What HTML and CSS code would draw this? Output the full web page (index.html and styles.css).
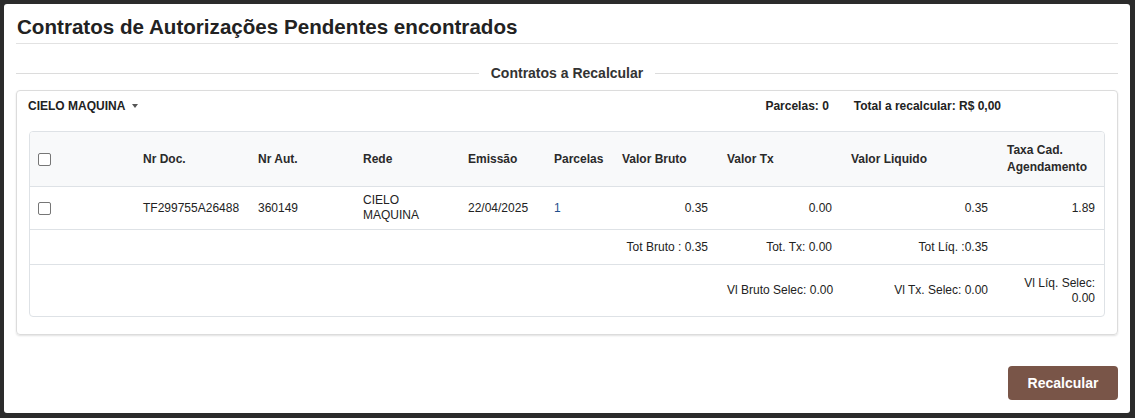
FILE: index.html
```html
<!DOCTYPE html>
<html lang="pt-BR">
<head>
<meta charset="utf-8">
<title>Contratos de Autorizações Pendentes</title>
<link rel="stylesheet" href="styles.css">
</head>
<body>
<div class="modal">
  <div class="modal-header">
    <h2 class="modal-title">Contratos de Autorizações Pendentes encontrados</h2>
  </div>
  <div class="legend">
    <span class="legend-line"></span>
    <span class="legend-text">Contratos a Recalcular</span>
    <span class="legend-line"></span>
  </div>
  <div class="card">
    <div class="card-head">
      <div class="rede-select">CIELO MAQUINA <span class="caret"></span></div>
      <div class="summary">
        <span>Parcelas: 0</span>
        <span>Total a recalcular: R$ 0,00</span>
      </div>
    </div>
    <div class="table-wrap">
      <table class="grid">
        <colgroup>
          <col class="c1"><col class="c2"><col class="c3"><col class="c4"><col class="c5">
          <col class="c6"><col class="c7"><col class="c8"><col class="c9"><col class="c10">
        </colgroup>
        <thead>
          <tr>
            <th class="chk"><span class="box"></span></th>
            <th>Nr Doc.</th>
            <th>Nr Aut.</th>
            <th>Rede</th>
            <th>Emissão</th>
            <th>Parcelas</th>
            <th>Valor Bruto</th>
            <th>Valor Tx</th>
            <th>Valor Liquido</th>
            <th>Taxa Cad.<br>Agendamento</th>
          </tr>
        </thead>
        <tbody>
          <tr class="row-data">
            <td class="chk"><span class="box"></span></td>
            <td>TF299755A26488</td>
            <td>360149</td>
            <td>CIELO<br>MAQUINA</td>
            <td>22/04/2025</td>
            <td class="link">1</td>
            <td class="num">0.35</td>
            <td class="num">0.00</td>
            <td class="num">0.35</td>
            <td class="num">1.89</td>
          </tr>
          <tr class="row-tot">
            <td></td><td></td><td></td><td></td><td></td><td></td>
            <td class="num nowrap">Tot Bruto : 0.35</td>
            <td class="num nowrap">Tot. Tx: 0.00</td>
            <td class="num nowrap">Tot Líq. :0.35</td>
            <td></td>
          </tr>
          <tr class="row-sel">
            <td></td><td></td><td></td><td></td><td></td><td></td><td></td>
            <td class="num nowrap">Vl Bruto Selec: 0.00</td>
            <td class="num nowrap">Vl Tx. Selec: 0.00</td>
            <td class="num">Vl Líq. Selec:<br>0.00</td>
          </tr>
        </tbody>
      </table>
    </div>
  </div>
  <div class="modal-footer">
    <button class="btn-recalc" type="button">Recalcular</button>
  </div>
</div>
</body>
</html>
```

FILE: styles.css
```css
* { box-sizing: border-box; }

html, body {
  margin: 0;
  height: 100%;
}

body {
  background: #2b2b2b;
  padding: 4px 5px 5px 4px;
  font-family: "Liberation Sans", Arial, sans-serif;
  color: #222;
}

.modal {
  background: #fff;
  border-radius: 3px;
  height: 409px;
  padding: 11px 12px 13px 12px;
  display: flex;
  flex-direction: column;
}

.modal-header {
  border-bottom: 1px solid #e2e2e2;
  padding-bottom: 4px;
}

.modal-title {
  margin: 0 0 0 1px;
  font-size: 20.6px;
  line-height: 24px;
  font-weight: bold;
  color: #222;
}

.legend {
  display: flex;
  align-items: center;
  margin-top: 21px;
  height: 16px;
}

.legend-line {
  flex: 1;
  height: 1px;
  background: #dcdcdc;
}

.legend-text {
  font-size: 14px;
  font-weight: bold;
  line-height: 16px;
  color: #333;
  padding: 0 12px 0 12px;
}

.card {
  margin-top: 9px;
  border: 1px solid #dcdcdc;
  border-radius: 4px;
  box-shadow: 0 1px 2px rgba(0, 0, 0, 0.12);
  padding: 7px 12px 17px 11px;
}

.card-head {
  display: flex;
  align-items: center;
  justify-content: space-between;
  height: 16px;
  font-size: 12px;
  font-weight: bold;
  color: #222;
}

.rede-select {
  display: flex;
  align-items: center;
  gap: 7px;
}

.caret {
  width: 0;
  height: 0;
  border-left: 3.5px solid transparent;
  border-right: 3.5px solid transparent;
  border-top: 4px solid #555;
  margin-top: -1px;
}

.summary {
  display: flex;
  gap: 25px;
  margin-right: 104px;
}

.table-wrap {
  margin-top: 17px;
  margin-left: 1px;
  border: 1px solid #dee2e6;
  border-radius: 4px;
  overflow: hidden;
}

.grid {
  width: 100%;
  border-collapse: separate;
  border-spacing: 0;
  table-layout: fixed;
  font-size: 12px;
  color: #222;
}

.c1 { width: 103px; }
.c2 { width: 115px; }
.c3 { width: 105px; }
.c4 { width: 105px; }
.c5 { width: 86px; }
.c6 { width: 68px; }
.c7 { width: 105px; }
.c8 { width: 124px; }
.c9 { width: 156px; }
.c10 { width: 107px; }

.grid th,
.grid td {
  padding: 0 9px 0 10px;
  vertical-align: middle;
  text-align: left;
}

.grid th {
  background: #f8f9fa;
  font-weight: bold;
  height: 54px;
  line-height: 17px;
  white-space: nowrap;
  color: #2a2a2a;
}

.grid td {
  line-height: 15px;
  border-top: 1px solid #dee2e6;
}

.grid .chk {
  padding-left: 8px;
}

.box {
  display: block;
  width: 13px;
  height: 13px;
  border: 1px solid #767676;
  border-radius: 2px;
  background: #fff;
}

.row-data td { height: 43px; }
.row-tot td { height: 35px; }
.row-sel td { height: 52px; }

.grid td.num { text-align: right; }

.grid td.nowrap { white-space: nowrap; }

.grid td.link { color: #1f4e8c; }

.modal-footer {
  margin-top: auto;
  display: flex;
  justify-content: flex-end;
}

.btn-recalc {
  width: 110px;
  height: 34px;
  border: none;
  border-radius: 4px;
  background: #795548;
  color: #fff;
  font-family: "Liberation Sans", Arial, sans-serif;
  font-size: 14px;
  font-weight: bold;
}
```
